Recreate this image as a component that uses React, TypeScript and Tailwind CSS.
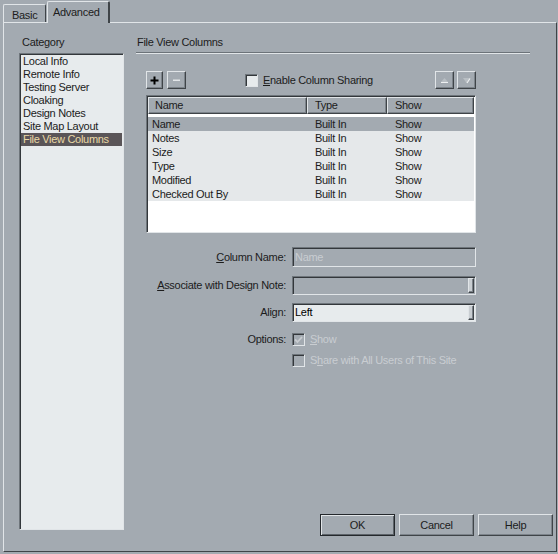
import clsx from 'clsx';

// Classic 3D bevels
const raised =
  'border border-t-[#e1e5e8] border-l-[#e1e5e8] border-r-[#3f4448] border-b-[#3f4448] shadow-[inset_-1px_-1px_0_#7c838a]';
const sunken =
  'border border-t-[#6e757b] border-l-[#6e757b] border-r-[#e1e5e8] border-b-[#e1e5e8] shadow-[inset_1px_1px_0_#33373b]';

const categories = [
  'Local Info',
  'Remote Info',
  'Testing Server',
  'Cloaking',
  'Design Notes',
  'Site Map Layout',
  'File View Columns',
];

const columns = [
  { name: 'Name', type: 'Built In', show: 'Show' },
  { name: 'Notes', type: 'Built In', show: 'Show' },
  { name: 'Size', type: 'Built In', show: 'Show' },
  { name: 'Type', type: 'Built In', show: 'Show' },
  { name: 'Modified', type: 'Built In', show: 'Show' },
  { name: 'Checked Out By', type: 'Built In', show: 'Show' },
];

function CheckBox({ checked = false, disabled = false }: { checked?: boolean; disabled?: boolean }) {
  return (
    <span
      className={clsx(
        'flex h-[13px] w-[13px] shrink-0 items-center justify-center',
        sunken,
        disabled ? 'bg-[#a3aab1]' : 'bg-[#e7ebed]'
      )}
    >
      {checked && (
        <svg width="9" height="8" viewBox="0 0 9 8">
          <path d="M1 3.5l2.5 2.5L8 1" fill="none" stroke={disabled ? '#c8ccd0' : '#000'} strokeWidth="1.8" />
        </svg>
      )}
    </span>
  );
}

function DropArrow() {
  return <span className={clsx('ml-auto mr-[1px] h-[15px] w-[6px] bg-[#c9ced2]', raised)} />;
}

function ToolButton({ children, className }: { children: React.ReactNode; className?: string }) {
  return (
    <span className={clsx('flex h-[18px] items-center justify-center bg-[#a3aab1]', raised, className)}>
      {children}
    </span>
  );
}

function FormRow({ label, children, top }: { label: React.ReactNode; children: React.ReactNode; top: string }) {
  return (
    <div className={clsx('flex items-center', top)}>
      <div className="w-[151px] shrink-0 pr-[1px] text-right">{label}</div>
      <div className="ml-[5px] flex w-[184px] items-center">{children}</div>
    </div>
  );
}

export default function App() {
  return (
    <div className="h-[554px] w-[558px] overflow-hidden bg-[#a3aab1] font-['Liberation_Sans',Arial,sans-serif] text-[11px] leading-[13px] tracking-[-0.3px] text-[#1c1c1c]">
      {/* tab strip */}
      <div className="flex h-[22px] items-end pl-[3px]">
        <div className="h-[18px] w-[43px] rounded-t-[2px] border-l border-t border-r border-l-[#e1e5e8] border-t-[#e1e5e8] border-r-[#3f4448] pl-[8px] pt-[4px]">
          Basic
        </div>
        <div className="relative z-10 -mb-px ml-[1px] h-[22px] w-[63px] rounded-t-[2px] border-l border-t border-r-2 border-l-[#e1e5e8] border-t-[#e1e5e8] border-r-[#3f4448] bg-[#a3aab1] pl-[5px] pt-[4px]">
          Advanced
        </div>
      </div>

      {/* page */}
      <div className="ml-[3px] flex h-[530px] w-[554px] border border-t-[#e1e5e8] border-l-[#e1e5e8] border-r-[#3f4448] border-b-[#3f4448]">
        {/* category list */}
        <div className="flex flex-col pb-[21px] pl-[15px] pt-[13px]">
          <div className="h-[13px] pl-[3px]">Category</div>
          <div className={clsx('mt-[4px] flex w-[105px] flex-1 flex-col bg-[#e7ebed] px-[1px] py-[1px]', sunken)}>
            {categories.map(c => (
              <div
                key={c}
                className={clsx(
                  'h-[13px] whitespace-nowrap pl-[2px]',
                  c === 'File View Columns' ? 'bg-[#5a5558] text-[#ead9a6]' : 'text-[#1c1c1c]'
                )}
              >
                {c}
              </div>
            ))}
          </div>
        </div>

        {/* settings */}
        <div className="ml-[12px] flex flex-1 flex-col pb-[15px] pr-[3px] pt-[13px]">
          <div className="h-[13px] pl-[1px]">File View Columns</div>
          <div className="mt-[3px] h-[2px] w-[394px] border-t border-b border-t-[#6c7379] border-b-[#e1e5e8]" />

          <div className="ml-[10px] w-[330px]">
            {/* toolbar */}
            <div className="mt-[17px] flex h-[18px] items-center">
              <ToolButton className="w-[17px]">
                <svg width="9" height="9" viewBox="0 0 9 9">
                  <path d="M4.5 0.5v8M0.5 4.5h8" stroke="#000" strokeWidth="2" />
                </svg>
              </ToolButton>
              <ToolButton className="ml-[4px] w-[19px]">
                <svg width="9" height="4" viewBox="0 0 9 4">
                  <path d="M1 1.5h7" stroke="#c3c8cc" strokeWidth="1" />
                  <path d="M1 2.5h7" stroke="#e3e6e9" strokeWidth="1" />
                </svg>
              </ToolButton>
              <span className="ml-[59px]">
                <CheckBox />
              </span>
              <span className="ml-[5px]">
                <u>E</u>nable Column Sharing
              </span>
              <ToolButton className="ml-auto w-[19px]">
                <svg width="9" height="7" viewBox="0 0 9 7">
                  <path d="M4.5 1L8 5H1z" fill="#b9bfc4" />
                  <path d="M1 5.5h7" stroke="#eef0f2" strokeWidth="1" />
                </svg>
              </ToolButton>
              <ToolButton className="ml-[3px] w-[19px]">
                <svg width="9" height="7" viewBox="0 0 9 7">
                  <path d="M1 1h7L4.5 6z" fill="#b9bfc4" />
                  <path d="M8 1.5L5 6" stroke="#eef0f2" strokeWidth="1.2" />
                </svg>
              </ToolButton>
            </div>

            {/* columns table */}
            <div className={clsx('mt-[6px] flex h-[138px] w-[330px] flex-col bg-white p-[1px]', sunken)}>
              <div className="flex h-[17px] shrink-0 bg-[#a3aab1]">
                <div className={clsx('flex w-[159px] items-center pl-[6px]', raised)}>Name</div>
                <div className={clsx('flex w-[80px] items-center pl-[7px]', raised)}>Type</div>
                <div className={clsx('flex flex-1 items-center pl-[7px]', raised)}>Show</div>
              </div>
              <div className="pt-[3px]">
                {columns.map((c, i) => (
                  <div
                    key={c.name}
                    className={clsx('flex h-[14px] items-center', i === 0 ? 'bg-[#a3aab1]' : 'bg-[#e5e8ea]')}
                  >
                    <div className="w-[159px] pl-[4px]">{c.name}</div>
                    <div className="w-[80px] pl-[8px]">{c.type}</div>
                    <div className="flex-1 pl-[8px]">{c.show}</div>
                  </div>
                ))}
              </div>
            </div>
          </div>

          {/* column properties */}
          <FormRow
            top="mt-[14px]"
            label={
              <>
                <u>C</u>olumn Name:
              </>
            }
          >
            <div className={clsx('flex h-[20px] w-full items-center bg-[#a3aab1] pl-[2px] text-[#c9cdd1]', sunken)}>
              Name
            </div>
          </FormRow>
          <FormRow
            top="mt-[9px]"
            label={
              <>
                <u>A</u>ssociate with Design Note:
              </>
            }
          >
            <div className={clsx('flex h-[19px] w-full items-center bg-[#a3aab1]', sunken)}>
              <DropArrow />
            </div>
          </FormRow>
          <FormRow top="mt-[8px]" label="Align:">
            <div className={clsx('flex h-[19px] w-full items-center bg-[#e7ebed] pl-[2px] text-[#000]', sunken)}>
              Left
              <DropArrow />
            </div>
          </FormRow>
          <FormRow top="mt-[11px]" label="Options:">
            <CheckBox checked disabled />
            <span className="ml-[5px] text-[#c9cdd1]">
              <u>S</u>how
            </span>
          </FormRow>
          <FormRow top="mt-[8px]" label="">
            <CheckBox disabled />
            <span className="ml-[5px] text-[#c9cdd1]">
              S<u>h</u>are with All Users of This Site
            </span>
          </FormRow>

          {/* dialog buttons */}
          <div className="mt-auto flex justify-end gap-[4px]">
            <button className="flex h-[22px] w-[75px] items-center justify-center border border-[#24282c] bg-[#a3aab1] shadow-[inset_1px_1px_0_#e1e5e8,inset_-1px_-1px_0_#5d6369]">
              OK
            </button>
            <button className={clsx('flex h-[22px] w-[75px] items-center justify-center bg-[#a3aab1]', raised)}>
              Cancel
            </button>
            <button className={clsx('flex h-[22px] w-[75px] items-center justify-center bg-[#a3aab1]', raised)}>
              Help
            </button>
          </div>
        </div>
      </div>
    </div>
  );
}
